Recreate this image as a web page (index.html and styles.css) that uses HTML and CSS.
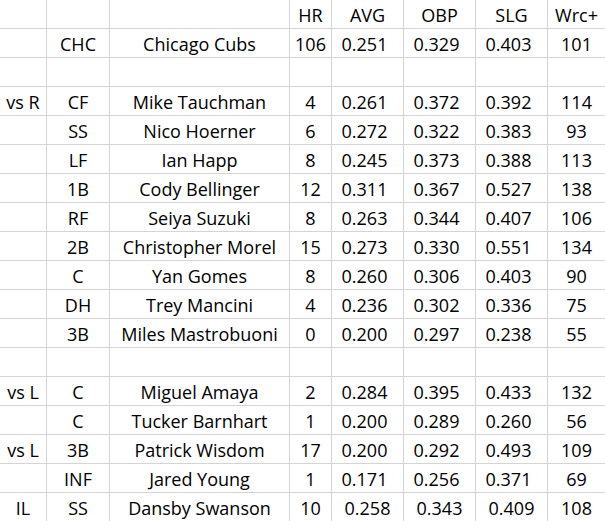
FILE: index.html
```html
<!DOCTYPE html>
<html>
<head>
<meta charset="utf-8">
<link rel="stylesheet" href="styles.css">
</head>
<body>
<div class="sheet">
  <div class="c"></div><div class="c"></div><div class="c"></div><div class="c">HR</div><div class="c">AVG</div><div class="c">OBP</div><div class="c">SLG</div><div class="c last">Wrc+</div>

  <div class="c"></div><div class="c">CHC</div><div class="c">Chicago Cubs</div><div class="c">106</div><div class="c d">0.251</div><div class="c d">0.329</div><div class="c d">0.403</div><div class="c last">101</div>

  <div class="c"></div><div class="c"></div><div class="c"></div><div class="c"></div><div class="c"></div><div class="c"></div><div class="c"></div><div class="c last"></div>

  <div class="c">vs R</div><div class="c">CF</div><div class="c">Mike Tauchman</div><div class="c">4</div><div class="c d">0.261</div><div class="c d">0.372</div><div class="c d">0.392</div><div class="c last">114</div>
  <div class="c"></div><div class="c">SS</div><div class="c">Nico Hoerner</div><div class="c">6</div><div class="c d">0.272</div><div class="c d">0.322</div><div class="c d">0.383</div><div class="c last">93</div>
  <div class="c"></div><div class="c">LF</div><div class="c">Ian Happ</div><div class="c">8</div><div class="c d">0.245</div><div class="c d">0.373</div><div class="c d">0.388</div><div class="c last">113</div>
  <div class="c"></div><div class="c">1B</div><div class="c">Cody Bellinger</div><div class="c">12</div><div class="c d">0.311</div><div class="c d">0.367</div><div class="c d">0.527</div><div class="c last">138</div>
  <div class="c"></div><div class="c">RF</div><div class="c">Seiya Suzuki</div><div class="c">8</div><div class="c d">0.263</div><div class="c d">0.344</div><div class="c d">0.407</div><div class="c last">106</div>
  <div class="c"></div><div class="c">2B</div><div class="c">Christopher Morel</div><div class="c">15</div><div class="c d">0.273</div><div class="c d">0.330</div><div class="c d">0.551</div><div class="c last">134</div>
  <div class="c"></div><div class="c">C</div><div class="c">Yan Gomes</div><div class="c">8</div><div class="c d">0.260</div><div class="c d">0.306</div><div class="c d">0.403</div><div class="c last">90</div>
  <div class="c"></div><div class="c">DH</div><div class="c">Trey Mancini</div><div class="c">4</div><div class="c d">0.236</div><div class="c d">0.302</div><div class="c d">0.336</div><div class="c last">75</div>
  <div class="c"></div><div class="c">3B</div><div class="c">Miles Mastrobuoni</div><div class="c">0</div><div class="c d">0.200</div><div class="c d">0.297</div><div class="c d">0.238</div><div class="c last">55</div>

  <div class="c"></div><div class="c"></div><div class="c"></div><div class="c"></div><div class="c"></div><div class="c"></div><div class="c"></div><div class="c last"></div>

  <div class="c">vs L</div><div class="c">C</div><div class="c">Miguel Amaya</div><div class="c">2</div><div class="c d">0.284</div><div class="c d">0.395</div><div class="c d">0.433</div><div class="c last">132</div>
  <div class="c"></div><div class="c">C</div><div class="c">Tucker Barnhart</div><div class="c">1</div><div class="c d">0.200</div><div class="c d">0.289</div><div class="c d">0.260</div><div class="c last">56</div>
  <div class="c">vs L</div><div class="c">3B</div><div class="c">Patrick Wisdom</div><div class="c">17</div><div class="c d">0.200</div><div class="c d">0.292</div><div class="c d">0.493</div><div class="c last">109</div>
  <div class="c"></div><div class="c">INF</div><div class="c">Jared Young</div><div class="c">1</div><div class="c d">0.171</div><div class="c d">0.256</div><div class="c d">0.371</div><div class="c last">69</div>
  <div class="c">IL</div><div class="c">SS</div><div class="c">Dansby Swanson</div><div class="c">10</div><div class="c">0.258</div><div class="c">0.343</div><div class="c">0.409</div><div class="c last">108</div>
</div>
</body>
</html>
```

FILE: styles.css
```css
html, body {
  margin: 0;
  padding: 0;
  background: #ffffff;
}

.sheet {
  display: grid;
  grid-template-columns: 47px 63px 180px 42px 72px 72px 72px 1fr;
  grid-auto-rows: 29px;
  width: 605px;
  font-family: "Open Sans", "Noto Sans CJK KR", sans-serif;
  font-size: 18px;
  color: #000000;
}

.c {
  box-sizing: border-box;
  border-right: 1px solid #d4d4d4;
  border-bottom: 1px solid #d4d4d4;
  text-align: center;
  line-height: 28px;
  padding-top: 1px;
  white-space: nowrap;
  overflow: hidden;
}

.c.last {
  border-right: none;
}

.c.d {
  padding-right: 6px;
}
```
